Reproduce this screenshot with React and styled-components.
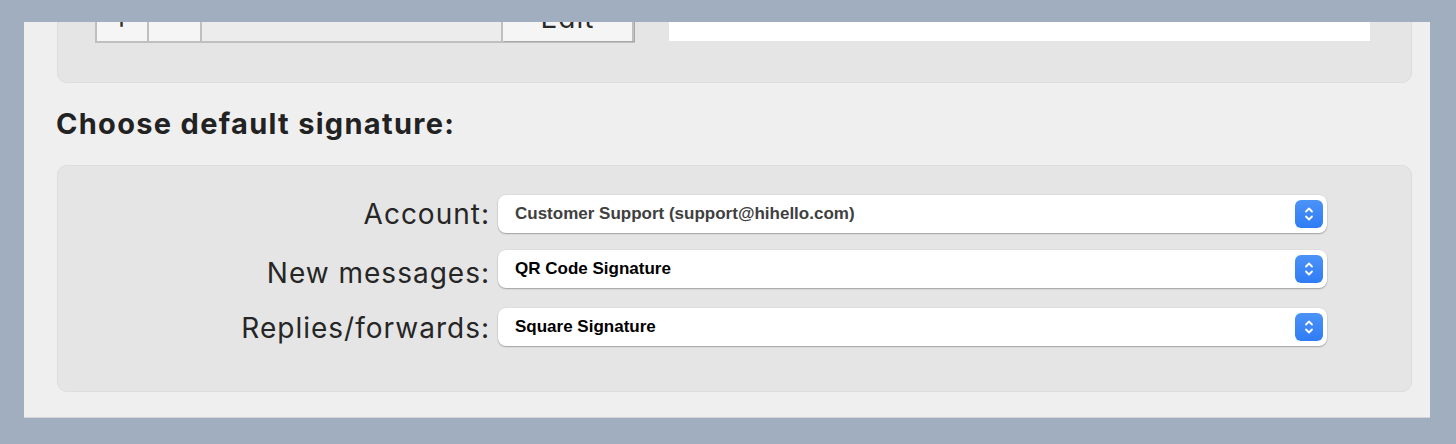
import React from "react"
import styled, { createGlobalStyle } from "styled-components"

const GlobalStyle = createGlobalStyle`
  html, body {
    margin: 0;
    padding: 0;
    background: #a1aec0;
  }
  body {
    font-family: Inter, "Liberation Sans", Arial, sans-serif;
  }
`

const Stage = styled.div`
  width: 1456px;
  height: 444px;
  padding: 22px 26px 26px 24px;
  box-sizing: border-box;
`

const Window = styled.div`
  width: 1406px;
  height: 396px;
  background: #efefef;
  border-bottom: 1px solid #d4d6da;
  box-sizing: border-box;
  overflow: hidden;
  padding: 0 18px 0 34px;
`

const Panel = styled.div`
  background: #e5e5e5;
  border: 1px solid #dddddd;
  border-radius: 10px;
  box-sizing: border-box;
  margin-left: -1px;
`

const TopPanel = styled(Panel)`
  margin-top: -60px;
  height: 121px;
  padding: 0 41px 39px 37px;
  display: flex;
  align-items: flex-end;
  justify-content: space-between;
`

const ButtonBar = styled.div`
  display: flex;
  height: 60px;
  border: 2px solid #bfbfbf;
  border-right-width: 1px;
  box-sizing: border-box;
`

const BarButton = styled.div`
  width: ${(p) => p.$w}px;
  background: ${(p) => (p.$blank ? "#ececec" : "#f5f5f5")};
  border-right: 2px solid #bfbfbf;
  display: flex;
  align-items: flex-end;
  justify-content: center;
  font-size: 28px;
  letter-spacing: 1px;
  color: #2a2a2a;
  line-height: 1;
  padding-bottom: 9px;
  box-sizing: border-box;
  box-shadow: ${(p) => (p.$shadow ? "1px 1px 0 #a8a8a8" : "none")};
`

const WhiteBox = styled.div`
  width: 701px;
  height: 60px;
  background: #ffffff;
  margin-bottom: 2px;
`

const Heading = styled.h2`
  margin: 0 0 0 -2px;
  padding: 23px 0 0 0;
  height: 82px;
  box-sizing: border-box;
  font-family: Inter, "Liberation Sans", Arial, sans-serif;
  font-weight: 700;
  font-size: 29px;
  letter-spacing: 1.3px;
  color: #222222;
`

const FormPanel = styled(Panel)`
  height: 227px;
  padding: 29px 0 0 0;
  display: grid;
  grid-template-columns: 432px 829px;
  column-gap: 8px;
  row-gap: 17px;
  align-content: start;
`

const Label = styled.div`
  text-align: right;
  font-size: 28px;
  letter-spacing: 1px;
  color: #262626;
  line-height: 38px;
  height: 38px;
  padding-top: ${(p) => p.$drop || 0}px;
  box-sizing: border-box;
`

const Select = styled.div`
  height: 38px;
  background: #ffffff;
  border-radius: 8px;
  box-shadow: 0 1px 1.5px rgba(0, 0, 0, 0.28), 0 0 0 0.5px rgba(0, 0, 0, 0.06);
  display: flex;
  align-items: center;
  justify-content: space-between;
  padding: 0 4px 0 17px;
  margin-top: ${(p) => p.$shift || 0}px;
`

const SelectText = styled.span`
  font-family: "Liberation Sans", Arial, sans-serif;
  font-weight: 700;
  font-size: 17px;
  color: ${(p) => (p.$muted ? "#404040" : "#000000")};
`

const Stepper = styled.div`
  width: 28px;
  height: 28px;
  border-radius: 6px;
  background: linear-gradient(#4c93f7, #2f7cf5);
  display: flex;
  align-items: center;
  justify-content: center;
`

function Chevrons() {
  return (
    <svg width="12" height="20" viewBox="0 0 12 20" fill="none">
      <path d="M3 7.5 L6 4.5 L9 7.5" stroke="#fff" strokeWidth="1.8" strokeLinecap="round" strokeLinejoin="round" />
      <path d="M3 12.5 L6 15.5 L9 12.5" stroke="#fff" strokeWidth="1.8" strokeLinecap="round" strokeLinejoin="round" />
    </svg>
  )
}

const rows = [
  { label: "Account:", value: "Customer Support (support@hihello.com)", muted: true, shift: 0 },
  { label: "New messages:", value: "QR Code Signature", shift: 0, drop: 4 },
  { label: "Replies/forwards:", value: "Square Signature", shift: 3, drop: 4 },
]

export default function App() {
  return (
    <>
      <GlobalStyle />
      <Stage>
        <Window>
          <TopPanel>
            <ButtonBar>
              <BarButton $w={52}>+</BarButton>
              <BarButton $w={53}>−</BarButton>
              <BarButton $w={301} $blank />
              <BarButton $w={131} $shadow>Edit</BarButton>
            </ButtonBar>
            <WhiteBox />
          </TopPanel>
          <Heading>Choose default signature:</Heading>
          <FormPanel>
            {rows.map((row) => (
              <React.Fragment key={row.label}>
                <Label $drop={row.drop}>{row.label}</Label>
                <Select $shift={row.shift}>
                  <SelectText $muted={row.muted}>{row.value}</SelectText>
                  <Stepper>
                    <Chevrons />
                  </Stepper>
                </Select>
              </React.Fragment>
            ))}
          </FormPanel>
        </Window>
      </Stage>
    </>
  )
}
